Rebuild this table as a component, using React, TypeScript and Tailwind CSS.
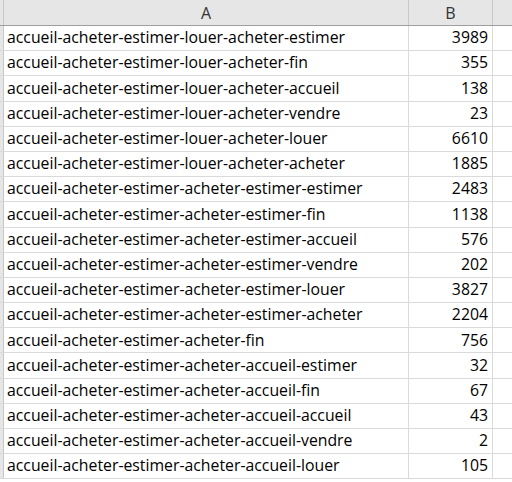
import React from "react";

const rows: [string, number][] = [
  ["accueil-acheter-estimer-louer-acheter-estimer", 3989],
  ["accueil-acheter-estimer-louer-acheter-fin", 355],
  ["accueil-acheter-estimer-louer-acheter-accueil", 138],
  ["accueil-acheter-estimer-louer-acheter-vendre", 23],
  ["accueil-acheter-estimer-louer-acheter-louer", 6610],
  ["accueil-acheter-estimer-louer-acheter-acheter", 1885],
  ["accueil-acheter-estimer-acheter-estimer-estimer", 2483],
  ["accueil-acheter-estimer-acheter-estimer-fin", 1138],
  ["accueil-acheter-estimer-acheter-estimer-accueil", 576],
  ["accueil-acheter-estimer-acheter-estimer-vendre", 202],
  ["accueil-acheter-estimer-acheter-estimer-louer", 3827],
  ["accueil-acheter-estimer-acheter-estimer-acheter", 2204],
  ["accueil-acheter-estimer-acheter-fin", 756],
  ["accueil-acheter-estimer-acheter-accueil-estimer", 32],
  ["accueil-acheter-estimer-acheter-accueil-fin", 67],
  ["accueil-acheter-estimer-acheter-accueil-accueil", 43],
  ["accueil-acheter-estimer-acheter-accueil-vendre", 2],
  ["accueil-acheter-estimer-acheter-accueil-louer", 105],
];

export default function App() {
  return (
    <div
      className="w-[512px] h-[482px] overflow-hidden bg-white text-black"
      style={{ fontFamily: '"Open Sans", "Liberation Sans", sans-serif' }}
    >
      <div className="flex h-[26px] bg-[#e6e6e6] border-b border-[#9e9e9e] text-[#333] text-[16px]">
        <div className="w-[4px] border-r border-[#c8c8c8]" />
        <div className="w-[405px] flex items-center justify-center border-r border-[#c8c8c8]">A</div>
        <div className="w-[84px] flex items-center justify-center border-r border-[#c8c8c8]">B</div>
        <div className="flex-1" />
      </div>
      {rows.map(([a, b], i) => (
        <div key={i} className="flex h-[25.2px] border-b border-[#dadada] text-[15.8px]">
          <div className="w-[4px] bg-[#e6e6e6] border-r border-[#c8c8c8]" />
          <div className="w-[405px] flex items-center pl-[3px] border-r border-[#dadada] whitespace-nowrap">{a}</div>
          <div className="w-[84px] flex items-center justify-end pr-[4px] border-r border-[#dadada]">{b}</div>
          <div className="flex-1" />
        </div>
      ))}
    </div>
  );
}
